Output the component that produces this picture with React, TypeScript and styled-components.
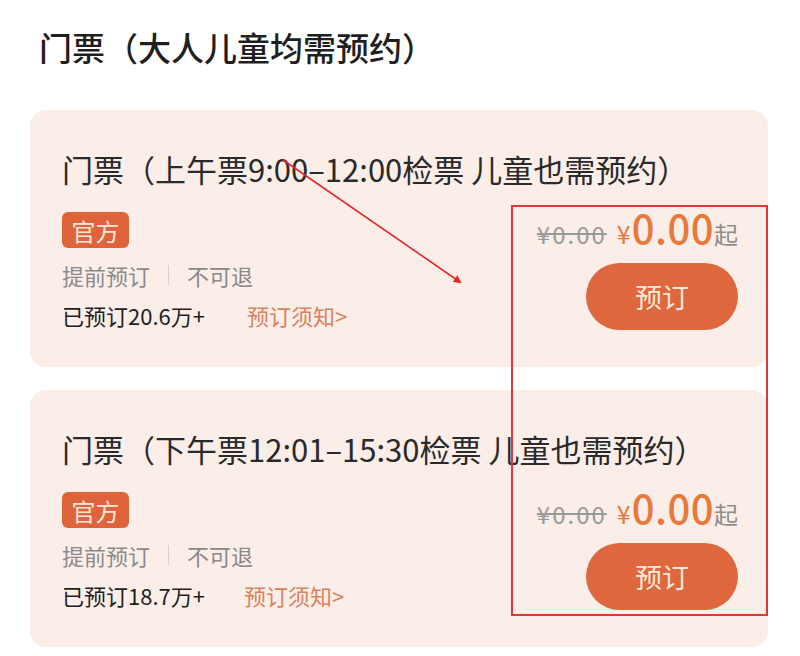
import React from 'react';
import styled, { createGlobalStyle } from 'styled-components';

const GlobalStyle = createGlobalStyle`
    html, body {
        margin: 0;
        padding: 0;
        background: #ffffff;
    }
    body {
        font-family: "Noto Sans CJK SC", "Noto Sans", sans-serif;
        color: #222;
    }
`;

const Page = styled.div`
    position: relative;
    width: 800px;
    height: 656px;
    overflow: hidden;
    padding: 22px 32px 0 30px;
    box-sizing: border-box;
`;

const Heading = styled.h1`
    margin: 0 0 0 9px;
    font-size: 33px;
    line-height: 50px;
    font-weight: 500;
    color: #1f1f1f;
`;

const CardList = styled.div`
    display: flex;
    flex-direction: column;
    gap: 23px;
    margin-top: 38px;
`;

const Card = styled.div`
    background: #fbeee9;
    border-radius: 16px;
    padding: 41px 30px 37px 32px;
`;

const CardTitle = styled.div`
    font-size: 31px;
    line-height: 36px;
    color: #2a2a2a;
    white-space: nowrap;
`;

const Body = styled.div`
    display: flex;
    justify-content: space-between;
    align-items: flex-start;
    margin-top: 25px;
`;

const Info = styled.div`
    display: flex;
    flex-direction: column;
    align-items: flex-start;
`;

const Badge = styled.span`
    display: inline-flex;
    align-items: center;
    justify-content: center;
    width: 67px;
    height: 36px;
    border-radius: 6px;
    background: #df633b;
    color: #fde8dc;
    font-size: 24px;
`;

const Meta = styled.div`
    display: flex;
    align-items: center;
    margin-top: 13px;
    font-size: 22px;
    line-height: 28px;
    color: #8a8a8a;
`;

const Divider = styled.span`
    width: 1px;
    height: 20px;
    background: #d6cfcc;
    margin: 0 18px;
`;

const Sold = styled.div`
    display: flex;
    align-items: center;
    margin-top: 12px;
    font-size: 22px;
    line-height: 28px;
    color: #1e1e1e;
`;

const Notice = styled.span<{ $gap: number }>`
    margin-left: ${(p) => p.$gap}px;
    color: #d9825c;
`;

const PriceCol = styled.div`
    display: flex;
    flex-direction: column;
    align-items: flex-end;
    margin-top: -5px;
`;

const PriceRow = styled.div`
    display: flex;
    align-items: baseline;
    line-height: 1;
`;

const OldPrice = styled.span`
    font-size: 24px;
    letter-spacing: 2px;
    color: #9a9a9a;
    text-decoration: line-through;
    margin-right: 10px;
`;

const Yen = styled.span`
    font-size: 25px;
    color: #e8793b;
`;

const Amount = styled.span`
    font-size: 40px;
    font-weight: 500;
    letter-spacing: 0.5px;
    color: #e8793b;
    margin-left: 1px;
`;

const Suffix = styled.span`
    font-size: 24px;
    color: #8d8d8d;
`;

const BookButton = styled.button`
    margin-top: 16px;
    width: 152px;
    height: 67px;
    border: none;
    border-radius: 34px;
    background: #df673e;
    color: #fdeadd;
    font-family: inherit;
    font-size: 27px;
    cursor: pointer;
`;

const Highlight = styled.div`
    position: absolute;
    left: 511px;
    top: 205px;
    width: 257px;
    height: 411px;
    border: 2px solid #e2373a;
    box-sizing: border-box;
    pointer-events: none;
`;

const Annotation = styled.svg`
    position: absolute;
    left: 0;
    top: 0;
    pointer-events: none;
`;

const tickets = [
    { title: '门票（上午票9:00–12:00检票 儿童也需预约）', sold: '已预订20.6万+', gap: 42 },
    { title: '门票（下午票12:01–15:30检票 儿童也需预约）', sold: '已预订18.7万+', gap: 39 },
];

const App: React.FC = () => {
    return (
        <Page>
            <GlobalStyle />
            <Heading>门票（大人儿童均需预约）</Heading>
            <CardList>
                {tickets.map((t) => (
                    <Card key={t.title}>
                        <CardTitle>{t.title}</CardTitle>
                        <Body>
                            <Info>
                                <Badge>官方</Badge>
                                <Meta>
                                    提前预订
                                    <Divider />
                                    不可退
                                </Meta>
                                <Sold>
                                    {t.sold}
                                    <Notice $gap={t.gap}>预订须知&gt;</Notice>
                                </Sold>
                            </Info>
                            <PriceCol>
                                <PriceRow>
                                    <OldPrice>¥0.00</OldPrice>
                                    <Yen>¥</Yen>
                                    <Amount>0.00</Amount>
                                    <Suffix>起</Suffix>
                                </PriceRow>
                                <BookButton>预订</BookButton>
                            </PriceCol>
                        </Body>
                    </Card>
                ))}
            </CardList>
            <Highlight />
            <Annotation width="800" height="656" viewBox="0 0 800 656">
                <defs>
                    <marker id="head" markerWidth="8" markerHeight="8" refX="6" refY="4" orient="auto" markerUnits="userSpaceOnUse">
                        <path d="M0 0 L8 4 L0 8 Z" fill="#e2272a" />
                    </marker>
                </defs>
                <line x1="283" y1="160" x2="460" y2="282" stroke="#e2272a" strokeWidth="1.6" markerEnd="url(#head)" />
            </Annotation>
        </Page>
    );
};

export default App;
